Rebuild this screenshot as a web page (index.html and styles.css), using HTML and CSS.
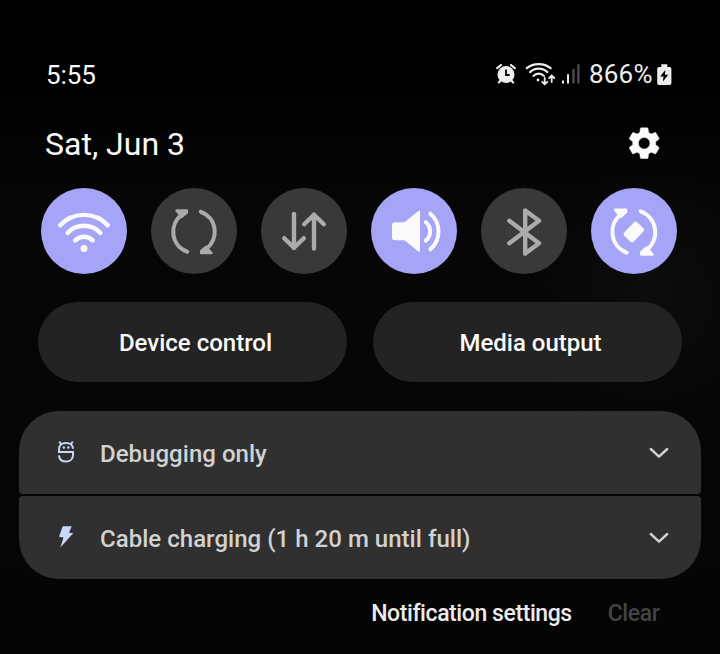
FILE: index.html
```html
<!DOCTYPE html>
<html lang="en">
<head>
<meta charset="utf-8">
<title>Quick panel</title>
<link rel="stylesheet" href="styles.css">
</head>
<body>
<main class="panel">
  <header class="status">
    <span class="clock">5:55</span>
    <div class="indicators">
      <svg class="alarm" width="20" height="20" viewBox="0 0 20 20">
        <circle cx="10" cy="10.5" r="8.5" fill="#ededed"/>
        <path d="M1.2 4.1 5 1M18.8 4.1 15 1M4.6 16.5 2.9 18.4M15.4 16.5 17.1 18.4" fill="none" stroke="#ededed" stroke-width="2.2" stroke-linecap="round"/>
        <path d="M10 5.5V11H13.6" fill="none" stroke="#000" stroke-width="1.8"/>
      </svg>
      <svg class="wifi-status" width="31" height="24" viewBox="0 0 31 24" fill="none" stroke="#ededed" stroke-width="2.2" stroke-linecap="round">
        <path d="M1.8 6.2C8.2.7 19.2.7 25.6 6.2M5 10.1C9.8 5.4 17.6 5.4 22.4 10.1M8.5 13.9C11.2 10.8 16.2 10.8 18.9 13.9"/>
        <circle cx="13" cy="18" r="1.4" fill="#ededed" stroke="none"/>
        <path d="M19.7 16V22M17.2 19.8 19.7 22.3 22.2 19.8M26.7 20V14M24.2 16 26.7 13.5 29.2 16" stroke-width="1.8"/>
      </svg>
      <svg class="signal" width="20" height="20" viewBox="0 0 20 20">
        <path d="M1 16.5h2v3h-2zM6 10.3h2v9.2h-2z" fill="#ededed"/>
        <path d="M11.4 5h2.2v14.5h-2.2zM16.3.3h2.2v19.2h-2.2z" fill="#505050"/>
      </svg>
      <span class="percent">866%</span>
      <svg class="battery" width="15" height="22" viewBox="0 0 15 22">
        <path d="M4.3.3H10.3V3H12.6Q14.4 3 14.4 4.8V19.2Q14.4 21 12.6 21H2Q.2 21 .2 19.2V4.8Q.2 3 2 3H4.3Z" fill="#ededed"/>
        <path d="M8.3 6 3.2 12.4H6.5L5.9 17.4 11.3 10.7H8Z" fill="#000"/>
      </svg>
    </div>
  </header>

  <div class="date-row">
    <span class="date">Sat, Jun 3</span>
    <svg class="gear" width="38.4" height="38.4" viewBox="0 0 24 24" fill="#fafafa">
      <path stroke="#fafafa" stroke-width=".3" d="M19.14 12.94c.04-.3.06-.61.06-.94 0-.32-.02-.64-.07-.94l2.03-1.58c.18-.14.23-.41.12-.61l-1.92-3.32c-.12-.22-.37-.29-.59-.22l-2.39.96c-.5-.38-1.03-.7-1.62-.94l-.36-2.54c-.04-.24-.24-.41-.48-.41h-3.84c-.24 0-.43.17-.47.41l-.36 2.54c-.59.24-1.13.57-1.62.94l-2.39-.96c-.22-.08-.47 0-.59.22L2.74 8.87c-.12.21-.08.47.12.61l2.03 1.58c-.05.3-.09.63-.09.94s.02.64.07.94l-2.03 1.58c-.18.14-.23.41-.12.61l1.92 3.32c.12.22.37.29.59.22l2.39-.96c.5.38 1.03.7 1.62.94l.36 2.54c.05.24.24.41.48.41h3.84c.24 0 .44-.17.47-.41l.36-2.54c.59-.24 1.13-.56 1.62-.94l2.39.96c.22.08.47 0 .59-.22l1.92-3.32c.12-.22.07-.47-.12-.61l-2.01-1.58zM12 15.6c-1.98 0-3.6-1.62-3.6-3.6s1.62-3.6 3.6-3.6 3.6 1.62 3.6 3.6-1.62 3.6-3.6 3.6z"/>
    </svg>
  </div>

  <section class="tiles">
    <div class="tile on">
      <svg viewBox="0 0 86 86">
        <path class="line" d="M19.2 37.2A32.5 32.5 0 0 1 66.8 37.2M26.6 44.9A22.5 22.5 0 0 1 59.4 44.9M34.2 52.4A12.5 12.5 0 0 1 51.8 52.4"/>
        <circle class="solid" cx="43" cy="60.6" r="3.5"/>
      </svg>
    </div>
    <div class="tile">
      <svg viewBox="0 0 86 86">
        <path class="line thin" d="M31 26.6A21.2 21.2 0 0 0 36.2 63.7M49.8 23.8A21.2 21.2 0 0 1 55 60.9"/>
        <path class="solid join" d="M25.6 22.6H35.8V24.6L31 28.6ZM60.4 65H50.2V63L55 59Z"/>
      </svg>
    </div>
    <div class="tile">
      <svg viewBox="0 0 86 86">
        <path class="line" d="M33 26V60M23.2 50.2 33 59.8 42.8 50.2M53 60.5V26.5M43.2 36.3 53 26.7 62.8 36.3"/>
      </svg>
    </div>
    <div class="tile on">
      <svg viewBox="0 0 86 86">
        <path class="solid" d="M24 34.2H33.5L47.3 23Q49 21.9 49 23.8V62.6Q49 64.5 47.3 63.4L33.5 52.2H24Q21 52.2 21 49.2V37.2Q21 34.2 24 34.2Z"/>
        <path class="line thin" d="M54.8 34.2A12 12 0 0 1 54.8 52.6M59.4 25.7A23.6 23.6 0 0 1 59.4 61.3"/>
      </svg>
    </div>
    <div class="tile">
      <svg viewBox="0 0 86 86">
        <path class="line" d="M28.3 32.8 58 55.2 44.2 65.6V22.4L58 32.8 28.3 55.2"/>
      </svg>
    </div>
    <div class="tile on">
      <svg viewBox="0 0 86 86">
        <path class="line thin" d="M30.5 25.8A22.3 22.3 0 0 0 35.6 64.6M49.6 23.3A22.3 22.3 0 0 1 55 62.3"/>
        <path class="solid join" d="M24.2 21.8H35V24L30 28.6ZM61.4 66.4H50.4V64L55.6 59.6Z"/>
        <rect class="solid" x="33.4" y="37.4" width="18.8" height="13.2" rx="2.5" transform="rotate(-47 42.8 44)"/>
      </svg>
    </div>
  </section>

  <section class="shortcuts">
    <div class="pill">Device control</div>
    <div class="pill">Media output</div>
  </section>

  <section class="notices">
    <div class="notice">
      <svg class="badge" width="20" height="24" viewBox="0 0 20 24">
        <path d="M17 8.8C17 5 14 2.9 10 2.9S3 5 3 9V12H17V15C17 19 14 21.5 10 21.5S3.3 19 3 15.3" fill="none" stroke="#c9d7fb" stroke-width="2"/>
        <path d="M3.2 1.6 5.2 4.2M16.8 1.6 14.8 4.2" stroke="#c9d7fb" stroke-width="2"/>
        <circle cx="7.8" cy="7.5" r="1.2" fill="#c9d7fb"/><circle cx="12.3" cy="7.5" r="1.2" fill="#c9d7fb"/>
      </svg>
      <span class="label">Debugging only</span>
      <svg class="chevron" width="20" height="12" viewBox="0 0 20 12"><path d="M1.8 2 10 9.6 18.2 2"/></svg>
    </div>
    <div class="notice">
      <svg class="badge" width="20" height="24" viewBox="0 0 20 24">
        <path d="M6.7 1.3H15.7L13 7.7L17.4 8L4.3 22.6L7.5 12.5L3 11.8Z" fill="#c9d7fb"/>
      </svg>
      <span class="label">Cable charging (1 h 20 m until full)</span>
      <svg class="chevron" width="20" height="12" viewBox="0 0 20 12"><path d="M1.8 2 10 9.6 18.2 2"/></svg>
    </div>
  </section>

  <footer class="actions">
    <span>Notification settings</span>
    <span class="disabled">Clear</span>
  </footer>
</main>
</body>
</html>
```
FILE: styles.css
```css
* { box-sizing: border-box; }

body {
  margin: 0;
  background: #040404;
  font-family: Roboto, "Liberation Sans", sans-serif;
  color: #fafafa;
}

svg { display: block; flex: none; }

.panel {
  width: 720px;
  height: 654px;
  padding-top: 59px;
  overflow: hidden;
  background:
    radial-gradient(circle at 650px 300px, #0c0c0e 0, transparent 130px),
    linear-gradient(#000 0, #000 60px, #060606 200px, #050505 100%);
}

.status {
  display: flex;
  justify-content: space-between;
  height: 32px;
  padding: 0 48px 0 46px;
  line-height: 32px;
  font-size: 26px;
}

.clock { letter-spacing: -0.1px; }

.indicators {
  display: flex;
  color: #ededed;
}

.alarm { margin: 5px 9px 0 0; }
.wifi-status { margin: 3px 5px 0 0; }
.signal { margin: 5px 8px 0 0; }
.percent { width: 68px; margin-top: -1px; letter-spacing: 0.2px; white-space: nowrap; }
.battery { margin-top: 5px; }

.date-row {
  display: flex;
  align-items: center;
  justify-content: space-between;
  height: 64px;
  margin-top: 20px;
  padding: 0 57px 0 45px;
}

.date { font-size: 32px; margin-top: 2px; }

.tiles {
  display: flex;
  gap: 24px;
  margin-top: 13px;
  padding-left: 41px;
}

.tile {
  width: 86px;
  height: 86px;
  border-radius: 50%;
  background: #393939;
  color: #ababab;
}

.tile.on {
  background: #a5a4f6;
  color: #fafafa;
}

.line {
  fill: none;
  stroke: currentColor;
  stroke-width: 4.4;
  stroke-linecap: round;
  stroke-linejoin: round;
}

.thin { stroke-width: 4; }
.solid { fill: currentColor; }
.join { stroke: currentColor; stroke-width: 2.6; stroke-linejoin: round; }

.shortcuts {
  display: flex;
  gap: 26px;
  margin-top: 28px;
  padding: 0 38px;
}

.pill {
  flex: 1;
  height: 80px;
  padding-left: 6px;
  border-radius: 40px;
  background: #232323;
  font-size: 24px;
  font-weight: 500;
  line-height: 82px;
  text-align: center;
}

.notices {
  display: grid;
  gap: 2px;
  margin-top: 29px;
  padding: 0 19px;
}

.notice {
  display: flex;
  align-items: center;
  height: 83px;
  padding: 0 32px 0 37px;
  border-radius: 4px;
  background: #303030;
  color: #d2d2d2;
  font-size: 24px;
  font-weight: 500;
}

.notice:first-child { border-radius: 40px 40px 4px 4px; }
.notice:last-child { border-radius: 4px 4px 40px 40px; }

.badge { margin-top: -2px; }
.label { flex: 1; margin: 3px 0 0 24px; letter-spacing: 0.03px; }

.chevron path {
  fill: none;
  stroke: #d2d2d2;
  stroke-width: 2.4;
  stroke-linecap: round;
  stroke-linejoin: round;
}

.actions {
  display: flex;
  justify-content: flex-end;
  gap: 36px;
  margin-top: 20px;
  padding-right: 60.6px;
  font-size: 23px;
  font-weight: 500;
  line-height: 30px;
  letter-spacing: -0.42px;
  color: #ececec;
}

.disabled { color: #434343; }
```
